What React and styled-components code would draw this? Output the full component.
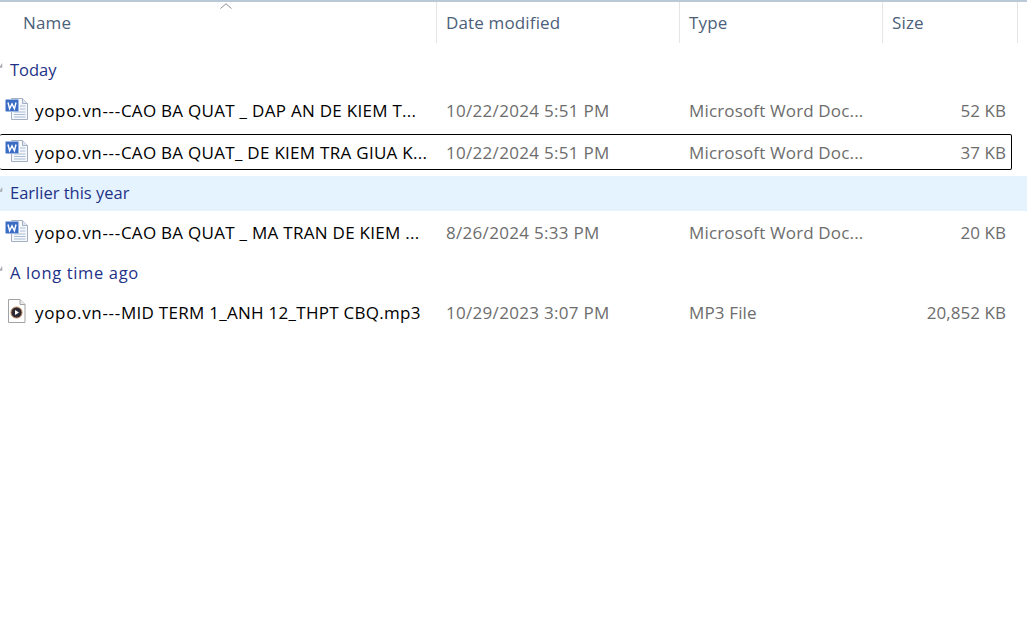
import React from "react";
import styled, { createGlobalStyle } from "styled-components";

const GlobalStyle = createGlobalStyle`
  html, body {
    margin: 0;
    padding: 0;
    background: #fff;
    overflow: hidden;
  }
  body {
    font-family: "Open Sans", "Noto Sans", "Liberation Sans", sans-serif;
  }
`;

const COLUMNS = "437px 243px 203px 135px 9px";
const PREFIX = "yopo.vn---";

const groups = [
  {
    label: "Today",
    files: [
      { name: "CAO BA QUAT _ DAP AN DE KIEM T...", date: "10/22/2024 5:51 PM", type: "Microsoft Word Doc...", size: "52 KB", kind: "word" },
      { name: "CAO BA QUAT_ DE KIEM TRA GIUA K...", date: "10/22/2024 5:51 PM", type: "Microsoft Word Doc...", size: "37 KB", kind: "word", focused: true },
    ],
  },
  {
    label: "Earlier this year",
    hovered: true,
    files: [
      { name: "CAO BA QUAT _ MA TRAN DE KIEM ...", date: "8/26/2024 5:33 PM", type: "Microsoft Word Doc...", size: "20 KB", kind: "word" },
    ],
  },
  {
    label: "A long time ago",
    wide: true,
    files: [
      { name: "MID TERM 1_ANH 12_THPT CBQ.mp3", date: "10/29/2023 3:07 PM", type: "MP3 File", size: "20,852 KB", kind: "audio" },
    ],
  },
];

const WordIcon = () => (
  <IconSvg viewBox="0 0 24 24">
    <path d="M6.5 1.5H17.5l5 5v16H6.5z" fill="#f6f8fc" stroke="#a3afc2" />
    <path d="M17.5 1.5v5h5" fill="#dde6f2" stroke="#a3afc2" />
    <path d="M15 9h5.5M15 12h5.5M9 15h11.5M9 17.5h11.5M9 20h11.5" stroke="#a9bbd3" strokeWidth="1.1" />
    <rect x="0.5" y="2.5" width="13" height="12" rx="1" fill="#3a6cc4" stroke="#9db8e2" />
    <path d="M3 5.5l1.6 6.2 2.4-4.8 2.4 4.8 1.6-6.2" fill="none" stroke="#fff" strokeWidth="1.4" />
  </IconSvg>
);

const AudioIcon = () => (
  <IconSvg viewBox="0 0 24 24">
    <path d="M3.5 0.5H15l5 5v18H3.5z" fill="#fff" stroke="#a2a2a2" />
    <path d="M15 0.5v5h5" fill="#ececec" stroke="#a2a2a2" />
    <circle cx="11.5" cy="13.5" r="5.6" fill="#2e2a33" stroke="#d29a72" />
    <path d="M10 11v5l4-2.5z" fill="#fff" />
  </IconSvg>
);

const SortCaret = () => (
  <CaretSvg viewBox="0 0 12 6">
    <path d="M0.5 5.5L6 0.8l5.5 4.7" fill="none" stroke="#8a8f96" />
  </CaretSvg>
);

const GroupChevron = () => (
  <ChevronSvg viewBox="0 0 4 6">
    <path d="M3 0.5v4H0" fill="#a8adb3" stroke="#a8adb3" strokeWidth="0.6" />
  </ChevronSvg>
);

const App = () => (
  <>
    <GlobalStyle />
    <Window>
      <Header>
        <HeaderCell>
          Name
          <SortCaret />
        </HeaderCell>
        <HeaderCell>Date modified</HeaderCell>
        <HeaderCell>Type</HeaderCell>
        <HeaderCell>Size</HeaderCell>
        <HeaderCell />
      </Header>
      <List>
        {groups.map((group) => (
          <Group key={group.label}>
            <GroupRow $hovered={group.hovered} $wide={group.wide}>
              <GroupChevron />
              {group.label}
            </GroupRow>
            {group.files.map((file) => (
              <FileRow key={file.name} $focused={file.focused}>
                <NameCell>
                  {file.kind === "word" ? <WordIcon /> : <AudioIcon />}
                  <FileName>
                    <Prefix>{PREFIX}</Prefix>
                    {file.name}
                  </FileName>
                </NameCell>
                <DateCell>{file.date}</DateCell>
                <MetaCell>{file.type}</MetaCell>
                <SizeCell>{file.size}</SizeCell>
              </FileRow>
            ))}
          </Group>
        ))}
      </List>
    </Window>
  </>
);

export default App;

const Window = styled.div`
  width: 1027px;
  height: 622px;
  background: #fff;
  overflow: hidden;
  border-top: 2px solid #b9c9d8;
  box-sizing: border-box;
`;

const Header = styled.div`
  position: relative;
  display: grid;
  grid-template-columns: ${COLUMNS};
  height: 41px;
`;

const HeaderCell = styled.div`
  display: flex;
  align-items: center;
  padding-left: 23px;
  box-sizing: border-box;
  font-size: 17px;
  letter-spacing: 0.15px;
  color: #4c607a;
  border-right: 1px solid #e5e5e5;

  &:nth-child(n + 2) {
    padding-left: 9px;
  }
  &:last-child {
    border-right: none;
  }
`;

const CaretSvg = styled.svg`
  position: absolute;
  left: 220px;
  top: 1px;
  width: 12px;
  height: 6px;
`;

const List = styled.div`
  display: flex;
  flex-direction: column;
  padding-top: 9px;
`;

const Group = styled.section`
  display: flex;
  flex-direction: column;
  margin-bottom: 5px;

  &:first-child {
    margin-bottom: 6px;
  }
`;

const GroupRow = styled.div`
  position: relative;
  display: flex;
  align-items: center;
  box-sizing: border-box;
  height: 35px;
  margin-bottom: 3px;
  padding-left: 10px;
  padding-bottom: ${(props) => (props.$hovered ? "2px" : "0")};
  font-size: 16.5px;
  letter-spacing: ${(props) => (props.$wide ? "0.65px" : "0")};
  color: #1e3287;
  background: ${(props) => (props.$hovered ? "#e5f3ff" : "transparent")};

  section:first-child > & {
    margin-bottom: 5px;
  }
  section:last-child > & {
    margin-bottom: 4px;
  }
`;

const ChevronSvg = styled.svg`
  position: absolute;
  left: -1px;
  top: 11px;
  width: 4px;
  height: 6px;
`;

const FileRow = styled.div`
  display: grid;
  grid-template-columns: ${COLUMNS};
  align-items: center;
  height: 36px;
  width: 1012px;
  box-sizing: border-box;
  border: 1px solid ${(props) => (props.$focused ? "#000" : "transparent")};
  border-left: none;
  border-radius: 2px;

  & + & {
    margin-top: 6px;
  }
`;

const NameCell = styled.div`
  display: flex;
  align-items: center;
  padding-left: 5px;
  gap: 6px;
  min-width: 0;
`;

const IconSvg = styled.svg`
  width: 24px;
  height: 24px;
  flex: none;
  margin-top: -2px;
`;

const FileName = styled.span`
  font-size: 17px;
  letter-spacing: 0.28px;
  color: #000;
  white-space: nowrap;
  overflow: hidden;
`;

const Prefix = styled.span`
  letter-spacing: 0.67px;
`;

const MetaCell = styled.div`
  padding-left: 9px;
  font-size: 17px;
  letter-spacing: 0.15px;
  color: #6d6d6d;
  white-space: nowrap;
`;

const DateCell = styled(MetaCell)`
  letter-spacing: 0.3px;
`;

const SizeCell = styled(MetaCell)`
  padding-left: 0;
  padding-right: 12px;
  letter-spacing: 0.05px;
  text-align: right;
`;
